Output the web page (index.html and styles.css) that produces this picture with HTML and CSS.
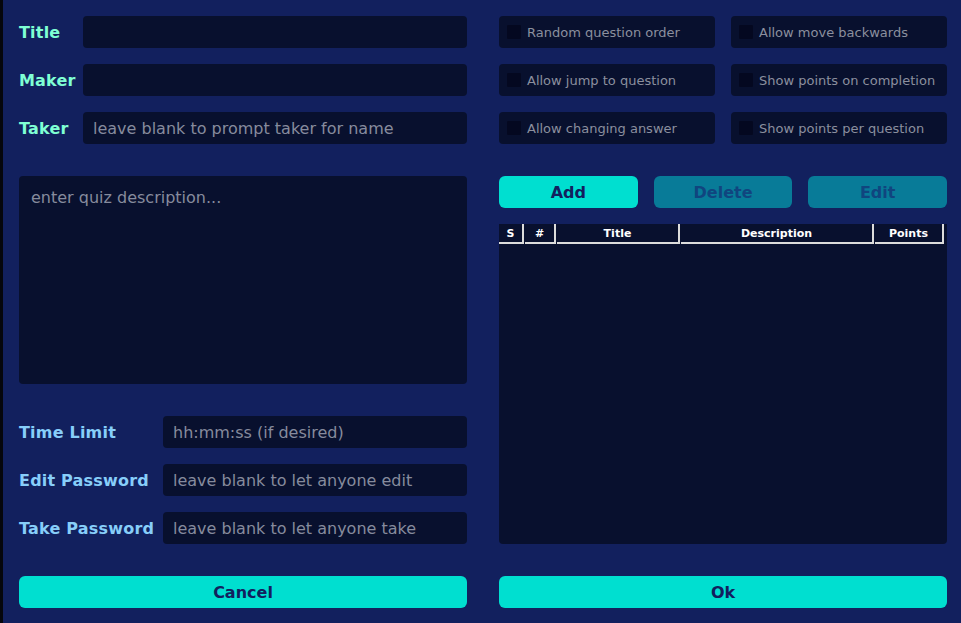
FILE: index.html
```html
<!DOCTYPE html>
<html>
<head>
<meta charset="utf-8">
<link rel="stylesheet" href="styles.css">
</head>
<body>
<div class="app">
  <div class="fields">
    <div class="field"><label class="lbl mint w64">Title</label><input class="inp" type="text"></div>
    <div class="field"><label class="lbl mint w64">Maker</label><input class="inp" type="text"></div>
    <div class="field"><label class="lbl mint w64">Taker</label><input class="inp" type="text" placeholder="leave blank to prompt taker for name"></div>
  </div>
  <div class="options">
    <div class="opt"><span class="box"></span>Random question order</div>
    <div class="opt"><span class="box"></span>Allow move backwards</div>
    <div class="opt"><span class="box"></span>Allow jump to question</div>
    <div class="opt"><span class="box"></span>Show points on completion</div>
    <div class="opt"><span class="box"></span>Allow changing answer</div>
    <div class="opt"><span class="box"></span>Show points per question</div>
  </div>

  <div class="left-mid">
    <textarea class="desc" placeholder="enter quiz description..."></textarea>
    <div class="fields">
      <div class="field"><label class="lbl sky w144">Time Limit</label><input class="inp" type="text" placeholder="hh:mm:ss (if desired)"></div>
      <div class="field"><label class="lbl sky w144">Edit Password</label><input class="inp" type="text" placeholder="leave blank to let anyone edit"></div>
      <div class="field"><label class="lbl sky w144">Take Password</label><input class="inp" type="text" placeholder="leave blank to let anyone take"></div>
    </div>
  </div>
  <div class="right-mid">
    <div class="actions">
      <button class="btn">Add</button>
      <button class="btn off">Delete</button>
      <button class="btn off">Edit</button>
    </div>
    <div class="table">
      <div class="thead">
        <div class="th c-s">S</div>
        <div class="th c-n">#</div>
        <div class="th c-t">Title</div>
        <div class="th c-d">Description</div>
        <div class="th c-p">Points</div>
      </div>
    </div>
  </div>

  <button class="btn wide">Cancel</button>
  <button class="btn wide">Ok</button>
</div>
</body>
</html>
```

FILE: styles.css
```css
* { box-sizing: border-box; }
html, body { margin: 0; padding: 0; }
body {
  background: #12205e;
  font-family: "DejaVu Sans", Verdana, sans-serif;
  width: 961px;
  height: 623px;
  overflow: hidden;
}
.app {
  height: 623px;
  border-left: 3px solid #05060c;
  padding: 16px 14px 15px 16px;
  display: grid;
  grid-template-columns: 448px 448px;
  grid-template-rows: auto auto auto;
  column-gap: 32px;
  row-gap: 32px;
  align-content: start;
}
.fields { display: flex; flex-direction: column; gap: 16px; }
.field { display: flex; align-items: center; height: 32px; }
.lbl { font-weight: bold; font-size: 16px; flex: none; letter-spacing: 0.2px; }
.w64 { width: 64px; }
.w144 { width: 144px; }
.mint { color: #7fffd4; }
.sky { color: #87cefa; }
.inp {
  flex: 1;
  min-width: 0;
  height: 32px;
  background: #08102e;
  border: none;
  border-radius: 4px;
  padding: 0 10px;
  font-family: "DejaVu Sans", sans-serif;
  font-size: 16px;
  color: #ddd;
  outline: none;
}
.inp::placeholder, .desc::placeholder { color: #868b9d; opacity: 1; }
.options {
  display: grid;
  grid-template-columns: 216px 216px;
  gap: 16px;
}
.opt {
  height: 32px;
  background: #08102e;
  border-radius: 4px;
  display: flex;
  align-items: center;
  padding-left: 8px;
  gap: 6px;
  font-size: 13px;
  color: #8b8f9e;
}
.box {
  width: 14px;
  height: 14px;
  background: #040820;
  border-radius: 1px;
  flex: none;
}
.left-mid { display: flex; flex-direction: column; gap: 32px; }
.desc {
  height: 208px;
  width: 100%;
  resize: none;
  background: #08102e;
  border: none;
  border-radius: 4px;
  padding: 12px 12px;
  font-family: "DejaVu Sans", sans-serif;
  font-size: 16px;
  color: #ddd;
  outline: none;
  display: block;
}
.right-mid { display: flex; flex-direction: column; gap: 16px; }
.actions { display: flex; gap: 16px; }
.btn {
  height: 32px;
  border: none;
  border-radius: 6px;
  background: #00dfd0;
  color: #12205e;
  font-family: "DejaVu Sans", sans-serif;
  font-weight: bold;
  font-size: 16px;
  padding: 0;
}
.actions .btn { flex: 1; }
.btn.off { background: #087b98; color: #10457f; }
.btn.wide { width: 100%; }
.table {
  height: 320px;
  background: #08102e;
  border-radius: 0 0 4px 4px;
}
.thead { display: flex; gap: 1px; height: 20px; }
.th {
  color: #fff;
  font-weight: bold;
  font-size: 11px;
  text-align: center;
  line-height: 18px;
  padding-top: 1px;
  border-right: 2px solid #dcdcdc;
  border-bottom: 2px solid #dcdcdc;
}
.c-s { width: 25px; }
.c-n { width: 31px; }
.c-t { width: 123px; }
.c-d { width: 193px; }
.c-p { width: 69px; }
```
